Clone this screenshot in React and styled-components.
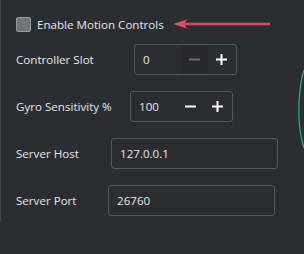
import React from "react";
import styled, { createGlobalStyle } from "styled-components";

const Global = createGlobalStyle`
  html, body {
    margin: 0;
    background: #2b2e31;
    font-family: "Open Sans", "Noto Sans", sans-serif;
    color: #e4e6e8;
  }
`;

const Screen = styled.div`
  position: relative;
  width: 304px;
  height: 254px;
  overflow: hidden;
  background: #2b2e31;
`;

const Panel = styled.div`
  border-left: 1px solid #44474a;
  width: 290px;
  padding: 15px 0 5px 15px;
  display: flex;
  flex-direction: column;
`;

const CheckRow = styled.label`
  display: flex;
  align-items: center;
  height: 18px;
  font-size: 11.6px;
  margin-bottom: 11px;
`;

const Box = styled.span`
  width: 13px;
  height: 13px;
  border: 1px solid #96999c;
  border-radius: 2px;
  background: #727578;
  margin-right: 6px;
`;

const Arrow = styled.svg`
  margin-left: 9px;
  display: block;
`;

const Row = styled.div`
  display: flex;
  align-items: center;
  height: 31px;
  margin-top: 16px;
  &:first-of-type { margin-top: 0; }
`;

const Label = styled.div`
  width: ${(p) => p.$w}px;
  font-size: 11.6px;
  flex-shrink: 0;
`;

const Spin = styled.div`
  width: 93px;
  height: 29px;
  border: 1px solid #56595c;
  border-radius: 3px;
  display: flex;
  align-items: center;
  padding-left: 8px;
  box-sizing: content-box;
  font-size: 11.6px;
`;

const Value = styled.span`
  flex: 1;
`;

const SpinBtn = styled.span`
  width: 27px;
  height: 29px;
  display: flex;
  align-items: center;
  justify-content: center;
  background: ${(p) => (p.$dim ? "#27292c" : "transparent")};
`;

const TextBox = styled.div`
  width: 157px;
  height: 29px;
  border: 1px solid #56595c;
  border-radius: 3px;
  display: flex;
  align-items: center;
  padding-left: 8px;
  box-sizing: content-box;
  font-size: 11.6px;
`;

const Curve = styled.svg`
  position: absolute;
  right: 0;
  top: 70px;
`;

const Minus = ({ color }) => (
  <svg width="11" height="11" viewBox="0 0 11 11">
    <path d="M0 5.5h11" stroke={color} strokeWidth="2" />
  </svg>
);

const Plus = () => (
  <svg width="11" height="11" viewBox="0 0 11 11">
    <path d="M0 5.5h11M5.5 0v11" stroke="#ffffff" strokeWidth="2" />
  </svg>
);

const SpinBox = ({ value, minDisabled }) => (
  <Spin>
    <Value>{value}</Value>
    <SpinBtn $dim={minDisabled}>
      <Minus color={minDisabled ? "#6d7073" : "#ffffff"} />
    </SpinBtn>
    <SpinBtn>
      <Plus />
    </SpinBtn>
    <span style={{ width: 1 }} />
  </Spin>
);

export default function App() {
  return (
    <Screen>
      <Global />
      <Panel>
        <CheckRow>
          <Box />
          Enable Motion Controls
          <Arrow width="97" height="12" viewBox="0 0 97 12">
            <path d="M12 6H96" stroke="#d84a5f" strokeWidth="2.6" strokeLinecap="round" />
            <path d="M0 6L14 1.5L11 6L14 10.5Z" fill="#e04e63" />
          </Arrow>
        </CheckRow>
        <Row>
          <Label $w={118}>Controller Slot</Label>
          <SpinBox value="0" minDisabled />
        </Row>
        <Row>
          <Label $w={114}>Gyro Sensitivity %</Label>
          <SpinBox value="100" />
        </Row>
        <Row>
          <Label $w={95}>Server Host</Label>
          <TextBox>127.0.0.1</TextBox>
        </Row>
        <Row>
          <Label $w={92}>Server Port</Label>
          <TextBox>26760</TextBox>
        </Row>
      </Panel>
      <Curve width="6" height="80" viewBox="0 0 6 80">
        <path d="M6 0C1 15 0 40 1.5 55C2.5 65 4 72 6 78" stroke="#2fae86" strokeWidth="1.2" fill="none" />
      </Curve>
    </Screen>
  );
}
